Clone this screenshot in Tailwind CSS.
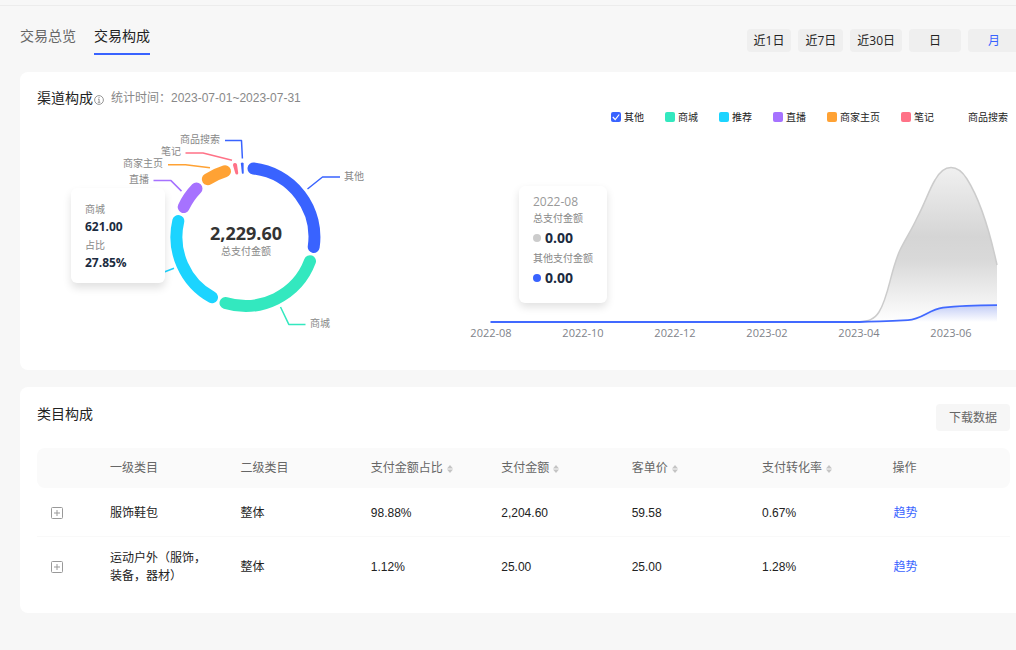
<!DOCTYPE html>
<html lang="zh-CN">
<head>
<meta charset="utf-8">
<meta name="viewport" content="width=device-width, initial-scale=1">
<title>交易构成</title>
<script src="https://cdn.jsdelivr.net/npm/@tailwindcss/browser@4"></script>
</head>
<body class="min-h-screen overflow-x-hidden bg-[#f7f7f7] font-['Liberation_Sans','Noto_Sans_CJK_SC',sans-serif] text-xs text-[#222]">
<div class="h-[6px] border-b border-[#ececec]"></div>

<header class="flex items-start justify-between pt-5 pl-5">
  <nav class="flex gap-[18px] text-sm leading-5">
    <a href="#" class="h-[29px] text-[#666]">交易总览</a>
    <a href="#" aria-current="page" class="h-[29px] border-b-2 border-[#3963ff] text-[#222]">交易构成</a>
  </nav>
  <div class="mt-[3px] flex gap-[7px] font-['Open_Sans','Noto_Sans_CJK_SC',sans-serif] leading-[23px]">
    <button class="h-[23px] rounded bg-[#efefef] px-[7px]">近1日</button>
    <button class="h-[23px] rounded bg-[#efefef] px-[7px]">近7日</button>
    <button class="h-[23px] rounded bg-[#efefef] px-[7px]">近30日</button>
    <button class="h-[23px] w-[52px] rounded bg-[#efefef] leading-[21px]">日</button>
    <button class="h-[23px] w-12 rounded-l bg-[#efefef] pl-1 leading-[21px] text-[#3963ff]">月</button>
  </div>
</header>

<main class="mt-[17px] ml-5 space-y-[17px]">
  <section class="rounded-l-lg bg-white pt-4">
    <div class="flex h-5 items-center pl-[17px]">
      <h2 class="text-sm leading-5">渠道构成</h2>
      <svg class="mt-1 ml-px size-[10px]" viewBox="0 0 10 10" fill="none" stroke="#8a8a8a" aria-hidden="true">
        <circle cx="5" cy="5" r="4.4" stroke-width=".9"/><path d="M4 4.2h1.1v3M3.8 7.3h2.5M4.6 2.6h1" stroke-width=".9"/>
      </svg>
      <p class="ml-[7px] text-[#888]">统计时间：2023-07-01~2023-07-31</p>
    </div>

    <div class="flex">
      <figure class="relative w-[435px] shrink-0">
        <svg class="block h-[262px] w-full font-['Open_Sans','Noto_Sans_CJK_SC',sans-serif]" viewBox="20 108 435 262" role="img" aria-label="渠道构成">
          <g fill="none" stroke-width="12" stroke-linecap="round">
            <path stroke="#3963ff" d="M253.5 168.5A69 69 0 0 1 313.7 247"/>
            <path stroke="#33e8bf" d="M310 261.2A69 69 0 0 1 225.5 303"/>
            <path stroke="#1cd4ff" d="M212 297.3A69 69 0 0 1 178.3 221"/>
            <path stroke="#a672ff" d="M183.7 207A69 69 0 0 1 196.5 188.5"/>
            <path stroke="#ffa234" d="M207.8 179.2A69 69 0 0 1 225 171.2"/>
          </g>
          <path fill="#ff7287" d="M233 165.2q-.3-1.8 1.5-2.1 2.2-.4 2.5 1.5l1.2 8.2q.2 1.6-1 1.8-1.4.2-1.9-1.3z"/>
          <path fill="#3963ff" d="M240.8 163q1.4-1.2 2.8 0l.1 10.2q-1 1-1.8 0z"/>
          <g fill="none" stroke-width="1.5" stroke-linejoin="round">
            <path stroke="#3963ff" d="M225 140.6h16.5l.9 17.9M307.500 189l15-12H340"/>
            <path stroke="#ff7287" d="M185.500 153H203l29 7.300"/>
            <path stroke="#ffa234" d="M168 164.700h17.500l24.500 3"/>
            <path stroke="#a672ff" d="M153.500 180.600h17.500l10.500 10.500"/>
            <path stroke="#1cd4ff" d="M174 268.300l-11 4.200"/>
            <path stroke="#33e8bf" d="M280.500 307l8.300 17.400h16.700"/>
          </g>
          <g fill="#888" font-size="10">
            <text x="180" y="143">商品搜索</text>
            <text x="161" y="155">笔记</text>
            <text x="123" y="167">商家主页</text>
            <text x="129" y="183">直播</text>
            <text x="344" y="180">其他</text>
            <text x="310" y="327">商城</text>
            <text x="246" y="255" text-anchor="middle">总支付金额</text>
          </g>
          <text x="246" y="240" text-anchor="middle" font-size="18" font-weight="700" fill="#333">2,229.60</text>
        </svg>
        <div class="absolute top-20 left-[51px] w-[94px] rounded-md bg-white px-[14px] pt-3 pb-[11px] font-['Open_Sans','Noto_Sans_CJK_SC',sans-serif] text-[10px] leading-[18px] text-[#888] shadow-[0_5px_8px_rgba(0,0,0,0.12)]">
          <p>商城</p>
          <p class="text-xs leading-[18px] font-bold text-[#1b2b40]">621.00</p>
          <p>占比</p>
          <p class="text-xs leading-[18px] font-bold text-[#1b2b40]">27.85%</p>
        </div>
      </figure>

      <figure class="relative min-w-0 flex-1 font-['Open_Sans','Noto_Sans_CJK_SC',sans-serif]">
        <div class="flex h-[18px] items-center justify-end gap-[21px] pr-2 text-[10px] leading-[18px] whitespace-nowrap">
          <label class="relative flex items-center gap-[3px]"><input type="checkbox" checked class="size-[10px] appearance-none rounded-[2px] bg-[#3963ff]"><svg class="pointer-events-none absolute left-0 size-[10px]" viewBox="0 0 10 10" fill="none" stroke="#fff" stroke-width="1.2" aria-hidden="true"><path d="M1.800 5l2.400 2.500 4-5"/></svg>其他</label>
          <label class="flex items-center gap-[3px]"><input type="checkbox" class="size-[10px] appearance-none rounded-[2px] bg-[#33e8bf]">商城</label>
          <label class="flex items-center gap-[3px]"><input type="checkbox" class="size-[10px] appearance-none rounded-[2px] bg-[#1cd4ff]">推荐</label>
          <label class="flex items-center gap-[3px]"><input type="checkbox" class="size-[10px] appearance-none rounded-[2px] bg-[#a672ff]">直播</label>
          <label class="flex items-center gap-[3px]"><input type="checkbox" class="size-[10px] appearance-none rounded-[2px] bg-[#ffa234]">商家主页</label>
          <label class="flex items-center gap-[3px]"><input type="checkbox" class="size-[10px] appearance-none rounded-[2px] bg-[#ff7287]">笔记</label>
          <label class="flex items-center gap-[3px]"><input type="checkbox" class="size-[10px] appearance-none rounded-[2px] bg-white">商品搜索</label>
        </div>
        <svg class="block w-full" viewBox="455 126 561 244" role="img" aria-label="支付金额趋势">
          <defs>
            <linearGradient id="total" x1="0" y1="0" x2="0" y2="1"><stop offset="0" stop-color="#f0f0f0"/><stop offset=".45" stop-color="#d5d5d5"/><stop offset=".6" stop-color="#d9d9d9"/><stop offset="1" stop-color="#fff"/></linearGradient>
            <linearGradient id="other" x1="0" y1="0" x2="0" y2="1"><stop offset="0" stop-color="#c3cdf6"/><stop offset="1" stop-color="#fff"/></linearGradient>
          </defs>
          <path fill="url(#total)" d="M859 322C868 321 874 320 879 312C889 296 890 272 900 250C906 238 912 229 917 218C925 203 929 190 935 180C940 171 945 167.500 951 167.500C957 167.500 962 171 967 179C979 198 989 228 997 265V322Z"/>
          <path fill="none" stroke="#ccc" stroke-width="1.500" d="M859 322C868 321 874 320 879 312C889 296 890 272 900 250C906 238 912 229 917 218C925 203 929 190 935 180C940 171 945 167.500 951 167.500C957 167.500 962 171 967 179C979 198 989 228 997 265"/>
          <path fill="url(#other)" d="M859 322C876 322 896 320.800 908 320.200C922 319.300 929 309.500 943 307.700C953 306.500 972 305.300 997 305.200V322Z"/>
          <path fill="none" stroke="#4169ff" stroke-width="1.800" d="M490.500 322H859C876 321.800 896 320.800 908 320.200C922 319.300 929 309.500 943 307.700C953 306.500 972 305.300 997 305.200"/>
          <g font-size="11" fill="#80838a" text-anchor="middle">
            <text x="491" y="337">2022-08</text><text x="583" y="337">2022-10</text><text x="675" y="337">2022-12</text><text x="767" y="337">2023-02</text><text x="859" y="337">2023-04</text><text x="951" y="337">2023-06</text>
          </g>
        </svg>
        <div class="absolute top-[78px] left-16 w-[88px] rounded-md bg-white px-[14px] pt-2 pb-[13px] text-[10px] leading-[16px] whitespace-nowrap text-[#888] shadow-[0_4px_8px_rgba(0,0,0,0.12)]">
          <p class="text-xs leading-4 text-[#999]">2022-08</p>
          <p>总支付金额</p>
          <p class="flex items-center gap-1 text-sm leading-6 font-bold text-[#1b2b40]"><span class="size-2 rounded-full bg-[#ccc]"></span>0.00</p>
          <p>其他支付金额</p>
          <p class="flex items-center gap-1 text-sm leading-6 font-bold text-[#1b2b40]"><span class="size-2 rounded-full bg-[#3963ff]"></span>0.00</p>
        </div>
      </figure>
    </div>
  </section>

  <section class="rounded-l-lg bg-white pt-[17px] pr-[6px] pb-4 pl-[17px]">
    <div class="flex items-start justify-between">
      <h2 class="text-sm leading-5">类目构成</h2>
      <button class="h-[27px] rounded bg-[#f6f6f6] px-[13px] pt-px leading-[27px] text-[#666]">下载数据</button>
    </div>
    <table class="mt-[17px] w-full table-fixed border-separate border-spacing-0 text-left leading-[18px]">
      <colgroup><col class="w-[60px]"><col><col><col><col><col><col><col></colgroup>
      <thead class="bg-[#fafafa] text-[#666]">
        <tr class="h-10">
          <th class="rounded-l-lg" aria-label="展开"></th>
          <th class="px-[13px] font-normal">一级类目</th>
          <th class="px-[13px] font-normal">二级类目</th>
          <th class="px-[13px] font-normal"><button class="flex items-center gap-1">支付金额占比<svg class="mt-px h-2 w-[6px]" viewBox="0 0 6 8" fill="#c4c4c4" aria-hidden="true"><path d="M3 0l3 3.400H0zM3 8l3-3.400H0z"/></svg></button></th>
          <th class="px-[13px] font-normal"><button class="flex items-center gap-1">支付金额<svg class="mt-px h-2 w-[6px]" viewBox="0 0 6 8" fill="#c4c4c4" aria-hidden="true"><path d="M3 0l3 3.400H0zM3 8l3-3.400H0z"/></svg></button></th>
          <th class="px-[13px] font-normal"><button class="flex items-center gap-1">客单价<svg class="mt-px h-2 w-[6px]" viewBox="0 0 6 8" fill="#c4c4c4" aria-hidden="true"><path d="M3 0l3 3.400H0zM3 8l3-3.400H0z"/></svg></button></th>
          <th class="px-[13px] font-normal"><button class="flex items-center gap-1">支付转化率<svg class="mt-px h-2 w-[6px]" viewBox="0 0 6 8" fill="#c4c4c4" aria-hidden="true"><path d="M3 0l3 3.400H0zM3 8l3-3.400H0z"/></svg></button></th>
          <th class="rounded-r-lg px-[13px] font-normal">操作</th>
        </tr>
      </thead>
      <tbody>
        <tr class="h-[49px] *:border-b *:border-[#f9f9f9] *:pt-0.5">
          <td class="pl-[14px]"><button aria-label="展开" class="block"><svg class="size-3" viewBox="0 0 12 12" fill="none" stroke="#999"><rect x=".5" y=".5" width="11" height="11" rx="1"/><path d="M3 6h6M6 3v6"/></svg></button></td>
          <td class="px-[13px]">服饰鞋包</td>
          <td class="px-[13px]">整体</td>
          <td class="px-[13px]">98.88%</td>
          <td class="px-[13px]">2,204.60</td>
          <td class="px-[13px]">59.58</td>
          <td class="px-[13px]">0.67%</td>
          <td class="px-[14px]"><a href="#" class="text-[#3963ff]">趋势</a></td>
        </tr>
        <tr class="h-[60px]">
          <td class="pl-[14px]"><button aria-label="展开" class="block"><svg class="size-3" viewBox="0 0 12 12" fill="none" stroke="#999"><rect x=".5" y=".5" width="11" height="11" rx="1"/><path d="M3 6h6M6 3v6"/></svg></button></td>
          <td class="px-[13px]">运动户外（服饰，<br>装备，器材）</td>
          <td class="px-[13px]">整体</td>
          <td class="px-[13px]">1.12%</td>
          <td class="px-[13px]">25.00</td>
          <td class="px-[13px]">25.00</td>
          <td class="px-[13px]">1.28%</td>
          <td class="px-[14px]"><a href="#" class="text-[#3963ff]">趋势</a></td>
        </tr>
      </tbody>
    </table>
  </section>
</main>
</body>
</html>
